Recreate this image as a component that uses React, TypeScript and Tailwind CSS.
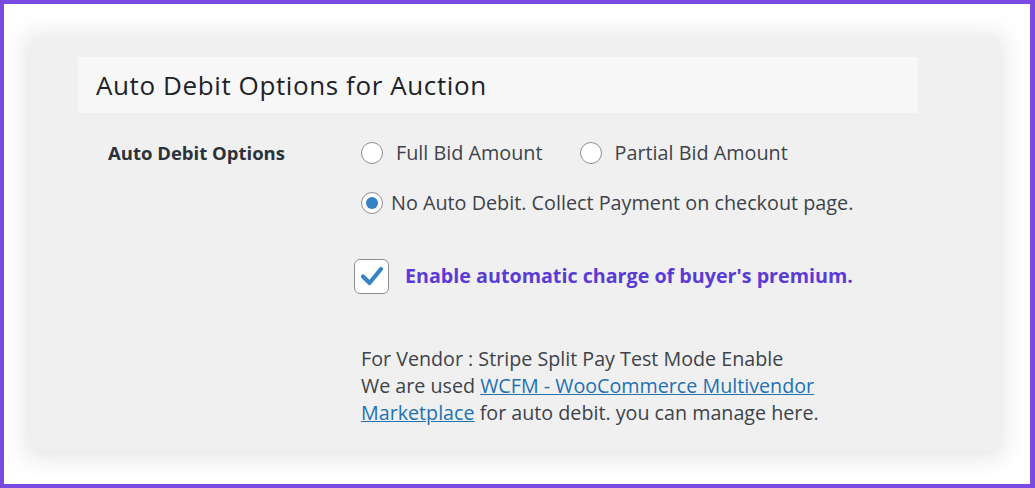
import { FC } from 'react';

type RadioProps = {
    label: string;
    checked?: boolean;
};

const Radio: FC<RadioProps> = ({ label, checked }) => (
    <label className="flex items-center">
        <span className="flex h-[22px] w-[22px] items-center justify-center rounded-full border border-[#8c8f94] bg-white">
            {checked && <span className="h-[12px] w-[12px] rounded-full bg-[#3582c4]" />}
        </span>
        <span className={checked ? 'ml-[8px]' : 'ml-[13px]'}>{label}</span>
    </label>
);

const CheckIcon = () => (
    <svg width="24" height="22" viewBox="0 0 24 22" fill="none">
        <path d="M3 11.5 L9.5 18 L21 4" stroke="#3582c4" strokeWidth="4.2" strokeLinecap="round" strokeLinejoin="round" />
    </svg>
);

export default function App() {
    return (
        <div className="h-[488px] w-[1035px] overflow-hidden border-t-[4px] border-l-[4px] border-r-[5px] border-b-[4px] border-[#7b4ae2] bg-white font-['Open_Sans','Noto_Sans',sans-serif]">
            <div className="ml-[27px] mt-[34px] h-[412px] w-[967px] bg-[#f0f0f1] pl-[47px] pr-[80px] pt-[19px] shadow-[0_2px_22px_6px_rgba(0,0,0,0.1)]">
                <div className="flex h-[56px] items-center bg-[#f7f7f8] pl-[18px]">
                    <h2 className="text-[26px] tracking-[0.6px] text-[#1d2327]">Auto Debit Options for Auction</h2>
                </div>

                <div className="flex h-[123px] border-b border-[#ececee]">
                    <div className="w-[283px] pl-[30px] pt-[27px] text-[18.5px] font-bold leading-[26px] text-[#2c3338]">Auto Debit Options</div>
                    <div className="flex flex-col gap-[24px] pt-[27px] text-[19.8px] leading-[26px] text-[#3c434a]">
                        <div className="flex gap-[37px]">
                            <Radio label="Full Bid Amount" />
                            <Radio label="Partial Bid Amount" />
                        </div>
                        <Radio label="No Auto Debit. Collect Payment on checkout page." checked />
                    </div>
                </div>

                <div className="flex h-[81px] items-center border-b border-[#ececee] pl-[276px]">
                    <span className="flex h-[35px] w-[35px] items-center justify-center rounded-[6px] border border-[#8c8f94] bg-white">
                        <CheckIcon />
                    </span>
                    <span className="ml-[16px] text-[19.7px] font-bold text-[#5b3bd6]">Enable automatic charge of buyer&apos;s premium.</span>
                </div>

                <div className="pl-[283px] pt-[28px] text-[19.7px] leading-[27px] text-[#3c434a]">
                    <p>For Vendor : Stripe Split Pay Test Mode Enable</p>
                    <p className="w-[480px]">
                        We are used{' '}
                        <a href="#" className="text-[#2271b1] underline">
                            WCFM - WooCommerce Multivendor Marketplace
                        </a>{' '}
                        for auto debit. you can manage here.
                    </p>
                </div>
            </div>
        </div>
    );
}
